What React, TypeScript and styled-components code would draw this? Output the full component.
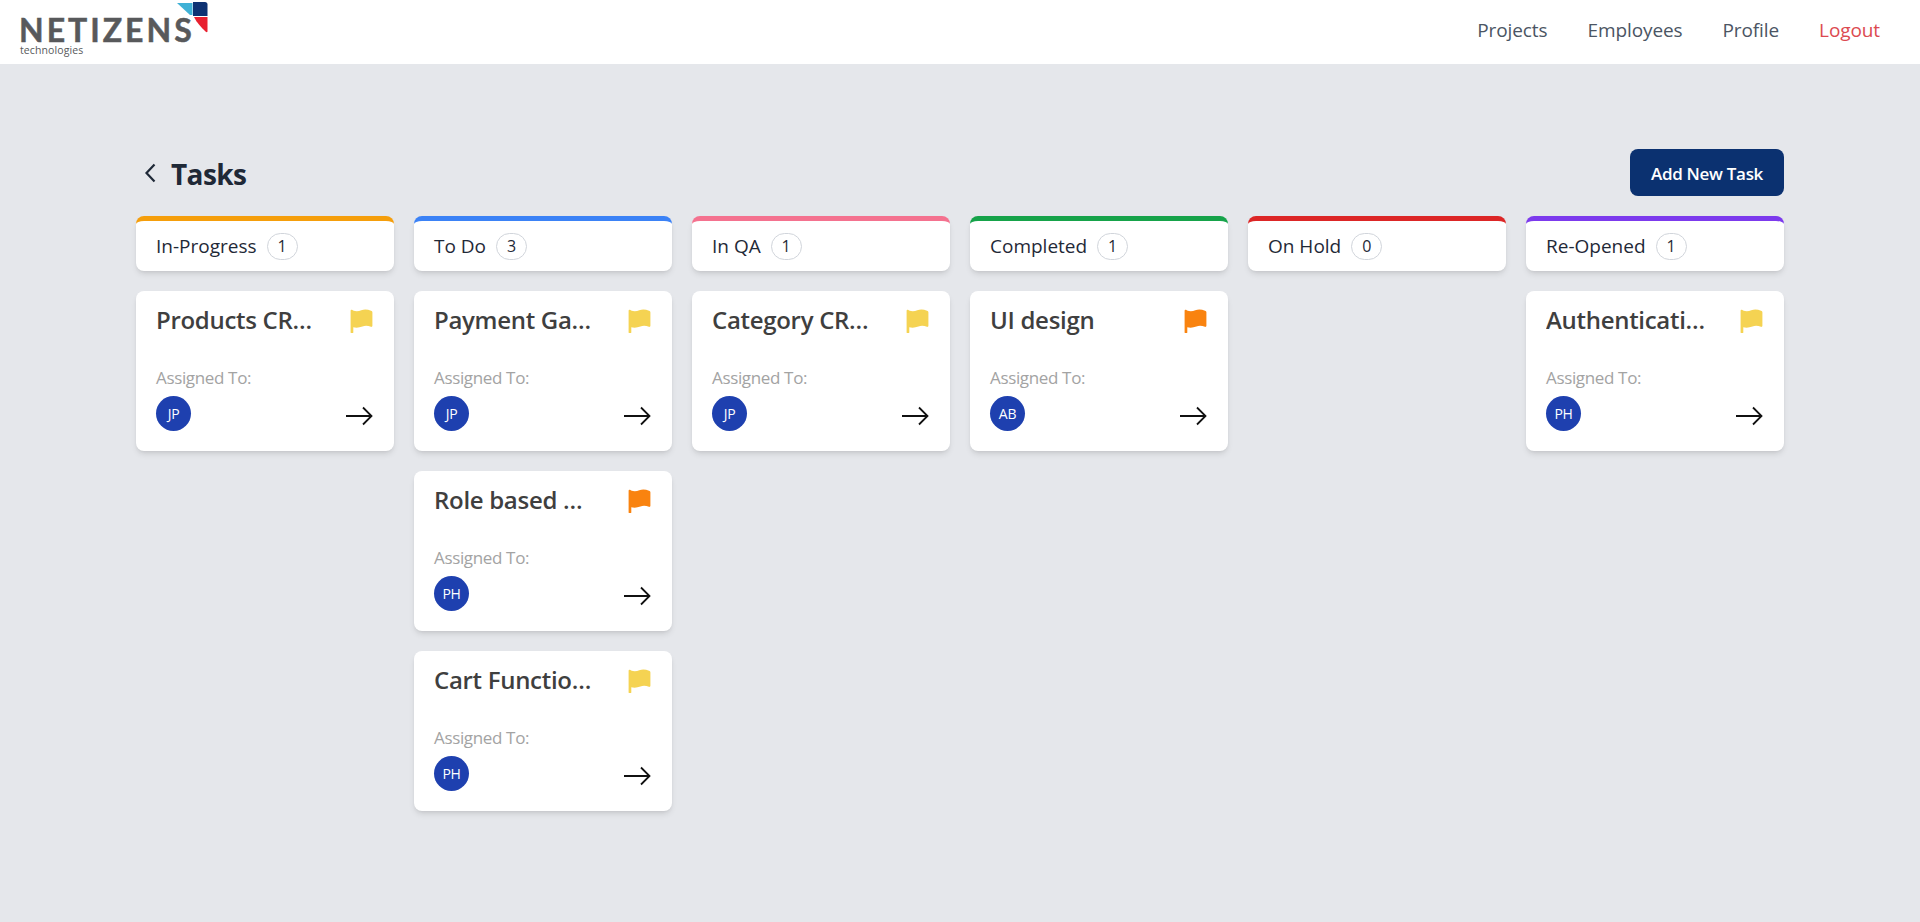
import React from "react";
import styled, { createGlobalStyle } from "styled-components";

const Global = createGlobalStyle`
  html, body { margin: 0; padding: 0; background: #e5e7eb; }
  body { font-family: "Open Sans", "Noto Sans", sans-serif; min-height: 922px; }
  * { box-sizing: border-box; }
`;

const Header = styled.header`
  height: 64px;
  background: #fff;
  display: flex;
  align-items: center;
  justify-content: space-between;
  padding: 0 40px 0 20px;
`;
const Logo = styled.div`
  position: relative;
  width: 190px;
  height: 64px;
`;
const LogoWord = styled.span`
  position: absolute;
  left: -1px;
  top: 16px;
  font-family: "Lato", sans-serif;
  font-weight: 700;
  font-size: 32px;
  line-height: 28px;
  letter-spacing: 3px;
  color: #58595b;
  -webkit-text-stroke: 0.5px #58595b;
`;
const LogoSub = styled.span`
  position: absolute;
  left: 0;
  top: 44px;
  font-family: "Open Sans", sans-serif;
  font-size: 10.500px;
  line-height: 12px;
  letter-spacing: 0.1px;
  color: #58595b;
`;
const LogoMark = styled.svg`
  position: absolute;
  left: 157px;
  top: 0;
`;
const Nav = styled.nav`
  display: flex;
  gap: 40px;
`;
const NavLink = styled.a<{ $danger?: boolean }>`
  font-size: 19px;
  line-height: 28px;
  letter-spacing: -0.1px;
  color: ${(p) => (p.$danger ? "#dc4a50" : "#4b5563")};
  position: relative;
  top: -2px;
`;
const Main = styled.main`
  padding: 85px 136px 0;
`;
const TitleRow = styled.div`
  display: flex;
  align-items: center;
  justify-content: space-between;
  height: 47px;
  margin-bottom: 20px;
`;
const TitleLeft = styled.div`
  display: flex;
  align-items: center;
  gap: 11px;
  color: #1f2937;
`;
const Title = styled.h1`
  margin: 0;
  padding-top: 2px;
  font-size: 28px;
  line-height: 36px;
  font-weight: 700;
  letter-spacing: -0.6px;
  color: #1f2937;
`;
const AddButton = styled.button`
  width: 154px;
  height: 47px;
  padding: 2px 0 0;
  background: #0b3170;
  color: #fff;
  border: 0;
  border-radius: 8px;
  font-family: inherit;
  font-weight: 600;
  font-size: 17px;
  letter-spacing: -0.3px;
`;
const Board = styled.div`
  display: grid;
  grid-template-columns: repeat(6, 258px);
  gap: 20px;
  align-items: start;
`;
const Column = styled.section`
  display: flex;
  flex-direction: column;
  gap: 20px;
`;
const ColumnHead = styled.div<{ $color: string }>`
  height: 55px;
  background: #fff;
  border-top: 5px solid ${(p) => p.$color};
  border-radius: 8px;
  box-shadow: 0 4px 6px -1px rgba(0, 0, 0, 0.1), 0 2px 4px -2px rgba(0, 0, 0, 0.1);
  display: flex;
  align-items: center;
  gap: 10px;
  padding: 0 20px;
  font-size: 19px;
  color: #1f2937;
`;
const Count = styled.span`
  min-width: 31px;
  height: 27px;
  border: 1px solid #d1d5db;
  border-radius: 14px;
  display: flex;
  align-items: center;
  justify-content: center;
  font-size: 16px;
`;
const Card = styled.article`
  height: 160px;
  background: #fff;
  border-radius: 8px;
  box-shadow: 0 4px 6px -1px rgba(0, 0, 0, 0.1), 0 2px 4px -2px rgba(0, 0, 0, 0.1);
  padding: 13px 21px 0 20px;
  display: flex;
  flex-direction: column;
`;
const CardTop = styled.div`
  display: flex;
  align-items: center;
  justify-content: space-between;
  height: 32px;
  margin-right: -1px;
  padding-top: 1px;
`;
const CardTitle = styled.h3`
  margin: 0 0 2px;
  width: 161px;
  font-size: 24px;
  line-height: 32px;
  font-weight: 600;
  letter-spacing: -0.3px;
  color: #3f3f3f;
  white-space: nowrap;
  overflow: hidden;
  text-overflow: ellipsis;
`;
const Assigned = styled.div`
  margin-top: 30px;
  font-size: 17px;
  line-height: 24px;
  letter-spacing: -0.35px;
  color: #a3a3a3;
`;
const CardBottom = styled.div`
  display: flex;
  align-items: flex-start;
  justify-content: space-between;
  margin-top: 6px;
`;
const Avatar = styled.span`
  width: 35px;
  height: 35px;
  border-radius: 50%;
  background: #1e40af;
  color: #fff;
  font-size: 14px;
  display: flex;
  align-items: center;
  justify-content: center;
  letter-spacing: -0.3px;
`;
const ArrowIcon = styled.svg`
  margin-top: 10px;
`;

const Flag = ({ color }: { color: string }) => (
  <svg width="24" height="24" viewBox="0 0 24 24">
    <path
      d="M.6 1.8C.6.6 2.600.4 3 1.400c3 1.200 5.600.9 8.300-.2 3-1 6.500-.8 9.700.5.800.3 1.400.7 1.400 1.600v13.500c0 .9-.8 1.300-1.500 1-2.800-1.100-5.600-1.500-8.500-.3-3 1.200-6 1.500-9.100.8v5c0 1.500-2.700 1.500-2.700 0z"
      fill={color}
    />
  </svg>
);

const Arrow = () => (
  <ArrowIcon width="27" height="20" viewBox="0 0 27 20" fill="none" stroke="#111" strokeWidth="1.8">
    <path d="M0 10h25M17 1.500 25.500 10 17 18.500" />
  </ArrowIcon>
);

const Back = () => (
  <svg width="24" height="24" viewBox="0 0 24 24" fill="none" stroke="#1f2937" strokeWidth="2.200">
    <path d="M18.500 3.500 10.500 12l8 8.500" />
  </svg>
);

type Task = { title: string; flag: string; who: string };
const Y = "#f5d352";
const O = "#f9830f";
const cols: { name: string; color: string; n: number; tasks: Task[] }[] = [
  { name: "In-Progress", color: "#f59e0b", n: 1, tasks: [{ title: "Products CRUD", flag: Y, who: "JP" }] },
  {
    name: "To Do",
    color: "#3b82f6",
    n: 3,
    tasks: [
      { title: "Payment Gateway", flag: Y, who: "JP" },
      { title: "Role based access", flag: O, who: "PH" },
      { title: "Cart Functionality", flag: Y, who: "PH" },
    ],
  },
  { name: "In QA", color: "#f4728f", n: 1, tasks: [{ title: "Category CRUD", flag: Y, who: "JP" }] },
  { name: "Completed", color: "#16a34a", n: 1, tasks: [{ title: "UI design", flag: O, who: "AB" }] },
  { name: "On Hold", color: "#dc2626", n: 0, tasks: [] },
  { name: "Re-Opened", color: "#7c3aed", n: 1, tasks: [{ title: "Authentication", flag: Y, who: "PH" }] },
];

export default function App() {
  return (
    <>
      <Global />
      <Header>
        <Logo>
          <LogoWord>NETIZENS</LogoWord>
          <LogoSub>technologies</LogoSub>
          <LogoMark width="34" height="34" viewBox="0 0 34 34">
            <path d="M0 3h15.500v12H13z" fill="#3fb1d6" />
            <path d="M16 2h12c1.500 0 2.500 1 2.500 2.500V16H16z" fill="#0e3273" />
            <path d="M17 17h13.500v14c0 1.500-1 1.500-2 .5C24 27 20 23 17 17z" fill="#e8202f" />
          </LogoMark>
        </Logo>
        <Nav>
          <NavLink>Projects</NavLink>
          <NavLink>Employees</NavLink>
          <NavLink>Profile</NavLink>
          <NavLink $danger>Logout</NavLink>
        </Nav>
      </Header>
      <Main>
        <TitleRow>
          <TitleLeft>
            <Back />
            <Title>Tasks</Title>
          </TitleLeft>
          <AddButton>Add New Task</AddButton>
        </TitleRow>
        <Board>
          {cols.map((c) => (
            <Column key={c.name}>
              <ColumnHead $color={c.color}>
                {c.name}
                <Count>{c.n}</Count>
              </ColumnHead>
              {c.tasks.map((t) => (
                <Card key={t.title}>
                  <CardTop>
                    <CardTitle>{t.title}</CardTitle>
                    <Flag color={t.flag} />
                  </CardTop>
                  <Assigned>Assigned To:</Assigned>
                  <CardBottom>
                    <Avatar>{t.who}</Avatar>
                    <Arrow />
                  </CardBottom>
                </Card>
              ))}
            </Column>
          ))}
        </Board>
      </Main>
    </>
  );
}
